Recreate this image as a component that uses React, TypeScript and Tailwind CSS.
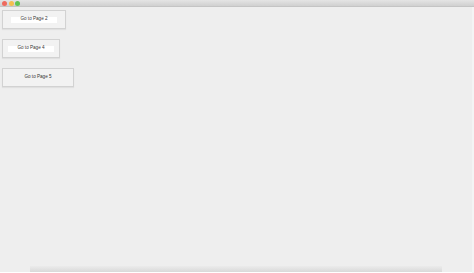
import React from 'react';

const buttons = [
  { label: 'Go to Page 2', w: 'w-[64px]', inner: true },
  { label: 'Go to Page 4', w: 'w-[58px]', inner: true },
  { label: 'Go to Page 5', w: 'w-[72px]', inner: false },
];

const PageButton = ({ label, w, inner }: { label: string; w: string; inner: boolean }) => (
  <button
    type="button"
    className={`${w} h-[19px] flex items-center justify-center border border-[#d2d2d2] bg-[#f2f2f2] shadow-[0_1px_1px_rgba(0,0,0,0.06)]`}
  >
    <span
      className={`px-[9px] h-[6px] flex items-center text-[4.6px] leading-none text-[#333] ${
        inner ? 'bg-white' : ''
      }`}
      style={{ fontFamily: '"Liberation Sans", Arial, sans-serif' }}
    >
      {label}
    </span>
  </button>
);

export default function App() {
  return (
    <div className="w-[474px] h-[273px] flex flex-col bg-white overflow-hidden">
      {/* title bar */}
      <div className="h-[7px] flex items-center gap-[1.5px] pl-[2px] bg-gradient-to-b from-[#e4e4e4] to-[#d0d0d0] border-b border-[#c4c4c4]">
        <span className="w-[5px] h-[5px] rounded-full bg-[#ee6a5e]" />
        <span className="w-[5px] h-[5px] rounded-full bg-[#f5bf4f]" />
        <span className="w-[5px] h-[5px] rounded-full bg-[#61c454]" />
      </div>
      {/* window body */}
      <div className="flex-1 flex flex-col bg-[#eeeeee] border-r-2 border-[#f4f4f4]">
        <div className="flex flex-col items-start gap-[10px] pl-[2px] pt-[3px]">
          {buttons.map((b) => (
            <PageButton key={b.label} {...b} />
          ))}
        </div>
        <div className="flex-1" />
        <div className="h-[6px] mx-[30px] bg-gradient-to-b from-[#ebebeb] to-[#d9d9d9]" />
        <div className="h-[1px] bg-white" />
      </div>
    </div>
  );
}
